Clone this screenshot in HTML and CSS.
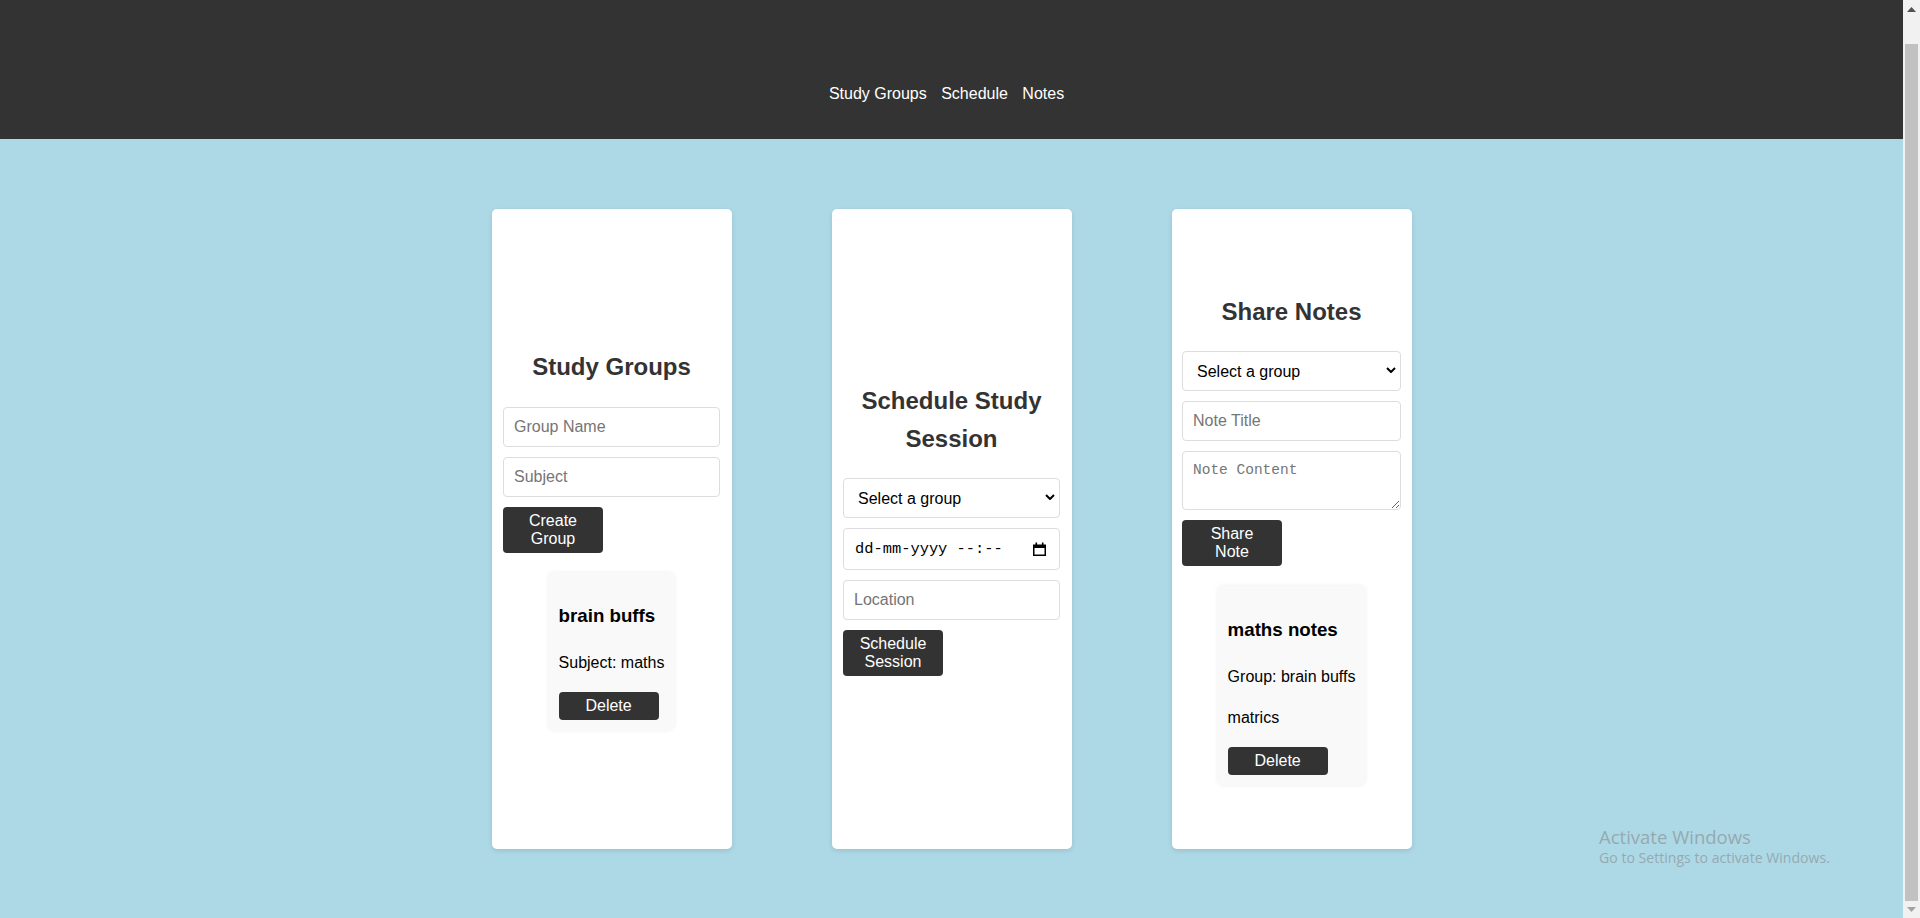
FILE: index.html
```html
<!DOCTYPE html>
<html lang="en">
<head>
<meta charset="utf-8">
<title>Study Groups</title>
<link rel="stylesheet" href="styles.css">
</head>
<body>
<div class="page">
  <header class="topbar">
    <nav class="nav">
      <a href="#groups" class="nav-link">Study Groups</a>
      <a href="#schedule" class="nav-link">Schedule</a>
      <a href="#notes" class="nav-link">Notes</a>
    </nav>
  </header>

  <main class="sections">
    <section class="card" id="groups">
      <h2 class="card-title">Study Groups</h2>
      <form class="form">
        <input class="field" type="text" placeholder="Group Name">
        <input class="field" type="text" placeholder="Subject">
        <button type="button" class="btn">Create Group</button>
      </form>
      <div class="list">
        <div class="item">
          <h3 class="item-title">brain buffs</h3>
          <p class="item-text">Subject: maths</p>
          <button type="button" class="btn btn-small">Delete</button>
        </div>
      </div>
    </section>

    <section class="card" id="schedule">
      <h2 class="card-title">Schedule Study Session</h2>
      <form class="form">
        <div class="select-wrap">
          <select class="field select">
            <option>Select a group</option>
          </select>
          <svg class="chevron" width="10" height="6" viewBox="0 0 10 6"><polyline points="1,1 5,5 9,1" fill="none" stroke="#000" stroke-width="2"/></svg>
        </div>
        <div class="field date-field">
          <span class="date-text">dd-mm-yyyy --:--</span>
          <svg class="cal-icon" width="13" height="14" viewBox="0 0 13 14">
            <rect x="0.75" y="3.25" width="11.5" height="10" fill="none" stroke="#000" stroke-width="1.5"/>
            <rect x="0.75" y="3" width="11.5" height="3" fill="#000"/>
            <rect x="2.5" y="0.5" width="1.6" height="3" fill="#000"/>
            <rect x="8.9" y="0.5" width="1.6" height="3" fill="#000"/>
          </svg>
        </div>
        <input class="field" type="text" placeholder="Location">
        <button type="button" class="btn">Schedule Session</button>
      </form>
      <div class="list"></div>
    </section>

    <section class="card" id="notes">
      <h2 class="card-title">Share Notes</h2>
      <form class="form form-wide">
        <div class="select-wrap">
          <select class="field select">
            <option>Select a group</option>
          </select>
          <svg class="chevron" width="10" height="6" viewBox="0 0 10 6"><polyline points="1,1 5,5 9,1" fill="none" stroke="#000" stroke-width="2"/></svg>
        </div>
        <input class="field" type="text" placeholder="Note Title">
        <textarea class="field textarea" placeholder="Note Content"></textarea>
        <button type="button" class="btn">Share Note</button>
      </form>
      <div class="list">
        <div class="item">
          <h3 class="item-title">maths notes</h3>
          <p class="item-text">Group: brain buffs</p>
          <p class="item-text">matrics</p>
          <button type="button" class="btn btn-small">Delete</button>
        </div>
      </div>
    </section>
  </main>

  <div class="watermark">
    <div class="wm-title">Activate Windows</div>
    <div class="wm-sub">Go to Settings to activate Windows.</div>
  </div>
</div>

<div class="scrollbar">
  <svg class="sb-arrow sb-up" width="9" height="5" viewBox="0 0 9 5"><polygon points="0,5 4.5,0 9,5" fill="#505050"/></svg>
  <div class="sb-thumb"></div>
  <svg class="sb-arrow sb-down" width="9" height="5" viewBox="0 0 9 5"><polygon points="0,0 4.5,5 9,0" fill="#a3a3a3"/></svg>
</div>
</body>
</html>
```
FILE: styles.css
```css
html, body {
  margin: 0;
  padding: 0;
  height: 918px;
  overflow: hidden;
}

body {
  background: #add8e6;
  font-family: "Liberation Sans", Arial, sans-serif;
  font-size: 16px;
  line-height: 1.6;
  color: #000;
}

.page {
  position: relative;
  width: calc(100% - 17px);
  height: 918px;
  overflow: hidden;
}

.topbar {
  background: #333;
  height: 139px;
  box-sizing: border-box;
  padding-top: 81px;
  text-align: center;
}

.nav-link {
  color: #fff;
  text-decoration: none;
  margin-right: 10px;
}

.sections {
  display: flex;
  justify-content: center;
  gap: 100px;
  padding-top: 70px;
}

.card {
  width: 240px;
  height: 640px;
  box-sizing: border-box;
  padding: 10px;
  background: #fff;
  border-radius: 5px;
  box-shadow: 0 2px 5px rgba(0, 0, 0, 0.1);
  display: flex;
  flex-direction: column;
  justify-content: center;
  align-items: center;
}

.card-title {
  font-size: 24px;
  color: #333;
  margin: 19.92px 0;
  text-align: center;
}

.form {
  width: 217px;
}

.form-wide {
  width: 219px;
}

.field {
  display: block;
  width: 100%;
  box-sizing: border-box;
  padding: 10px;
  margin: 0 0 10px 0;
  border: 1px solid #ddd;
  border-radius: 4px;
  font-family: "Liberation Sans", Arial, sans-serif;
  font-size: 16px;
  line-height: normal;
  color: #000;
  background: #fff;
}

.field::placeholder {
  color: #757575;
}

.select-wrap {
  position: relative;
}

.select {
  appearance: none;
  -webkit-appearance: none;
  padding-left: 14px;
  height: 40px;
}

.chevron {
  position: absolute;
  right: 5px;
  top: 16px;
  pointer-events: none;
}

.date-field {
  display: flex;
  align-items: center;
  justify-content: space-between;
  height: 42px;
  padding: 0 13px 0 11px;
}

.date-text {
  font-family: "Liberation Mono", "DejaVu Sans Mono", monospace;
  font-size: 15.4px;
  line-height: 1;
}

.cal-icon {
  display: block;
}

.textarea {
  height: 59px;
  resize: vertical;
  font-family: "Liberation Mono", "DejaVu Sans Mono", monospace;
  font-size: 14.5px;
}

.btn {
  display: block;
  width: 100px;
  padding: 5px 10px;
  background: #333;
  color: #fff;
  border: none;
  border-radius: 4px;
  font-family: "Liberation Sans", Arial, sans-serif;
  font-size: 16px;
  line-height: normal;
  text-align: center;
}

.list {
  margin-top: 20px;
  display: flex;
  justify-content: center;
}

.item {
  background: #f9f9f9;
  padding: 10px;
  border-radius: 5px;
  box-shadow: 0 0 5px rgba(0, 0, 0, 0.08);
}

.item-title {
  font-size: 18.72px;
  margin: 18.72px 0;
}

.item-text {
  margin: 16px 0;
}

.watermark {
  position: absolute;
  left: 1599px;
  top: 826px;
  color: rgba(128, 128, 128, 0.55);
  font-family: "Open Sans", "Noto Sans", sans-serif;
  line-height: 1.2;
}

.wm-title {
  font-size: 18.5px;
}

.wm-sub {
  font-size: 14.1px;
  margin-top: 2px;
}

.scrollbar {
  position: fixed;
  top: 0;
  right: 0;
  width: 17px;
  height: 918px;
  background: #f1f1f1;
}

.sb-arrow {
  position: absolute;
  left: 4px;
}

.sb-up {
  top: 7px;
}

.sb-down {
  bottom: 6px;
}

.sb-thumb {
  position: absolute;
  left: 2px;
  width: 13px;
  top: 44px;
  height: 857px;
  background: #c1c1c1;
}
```
